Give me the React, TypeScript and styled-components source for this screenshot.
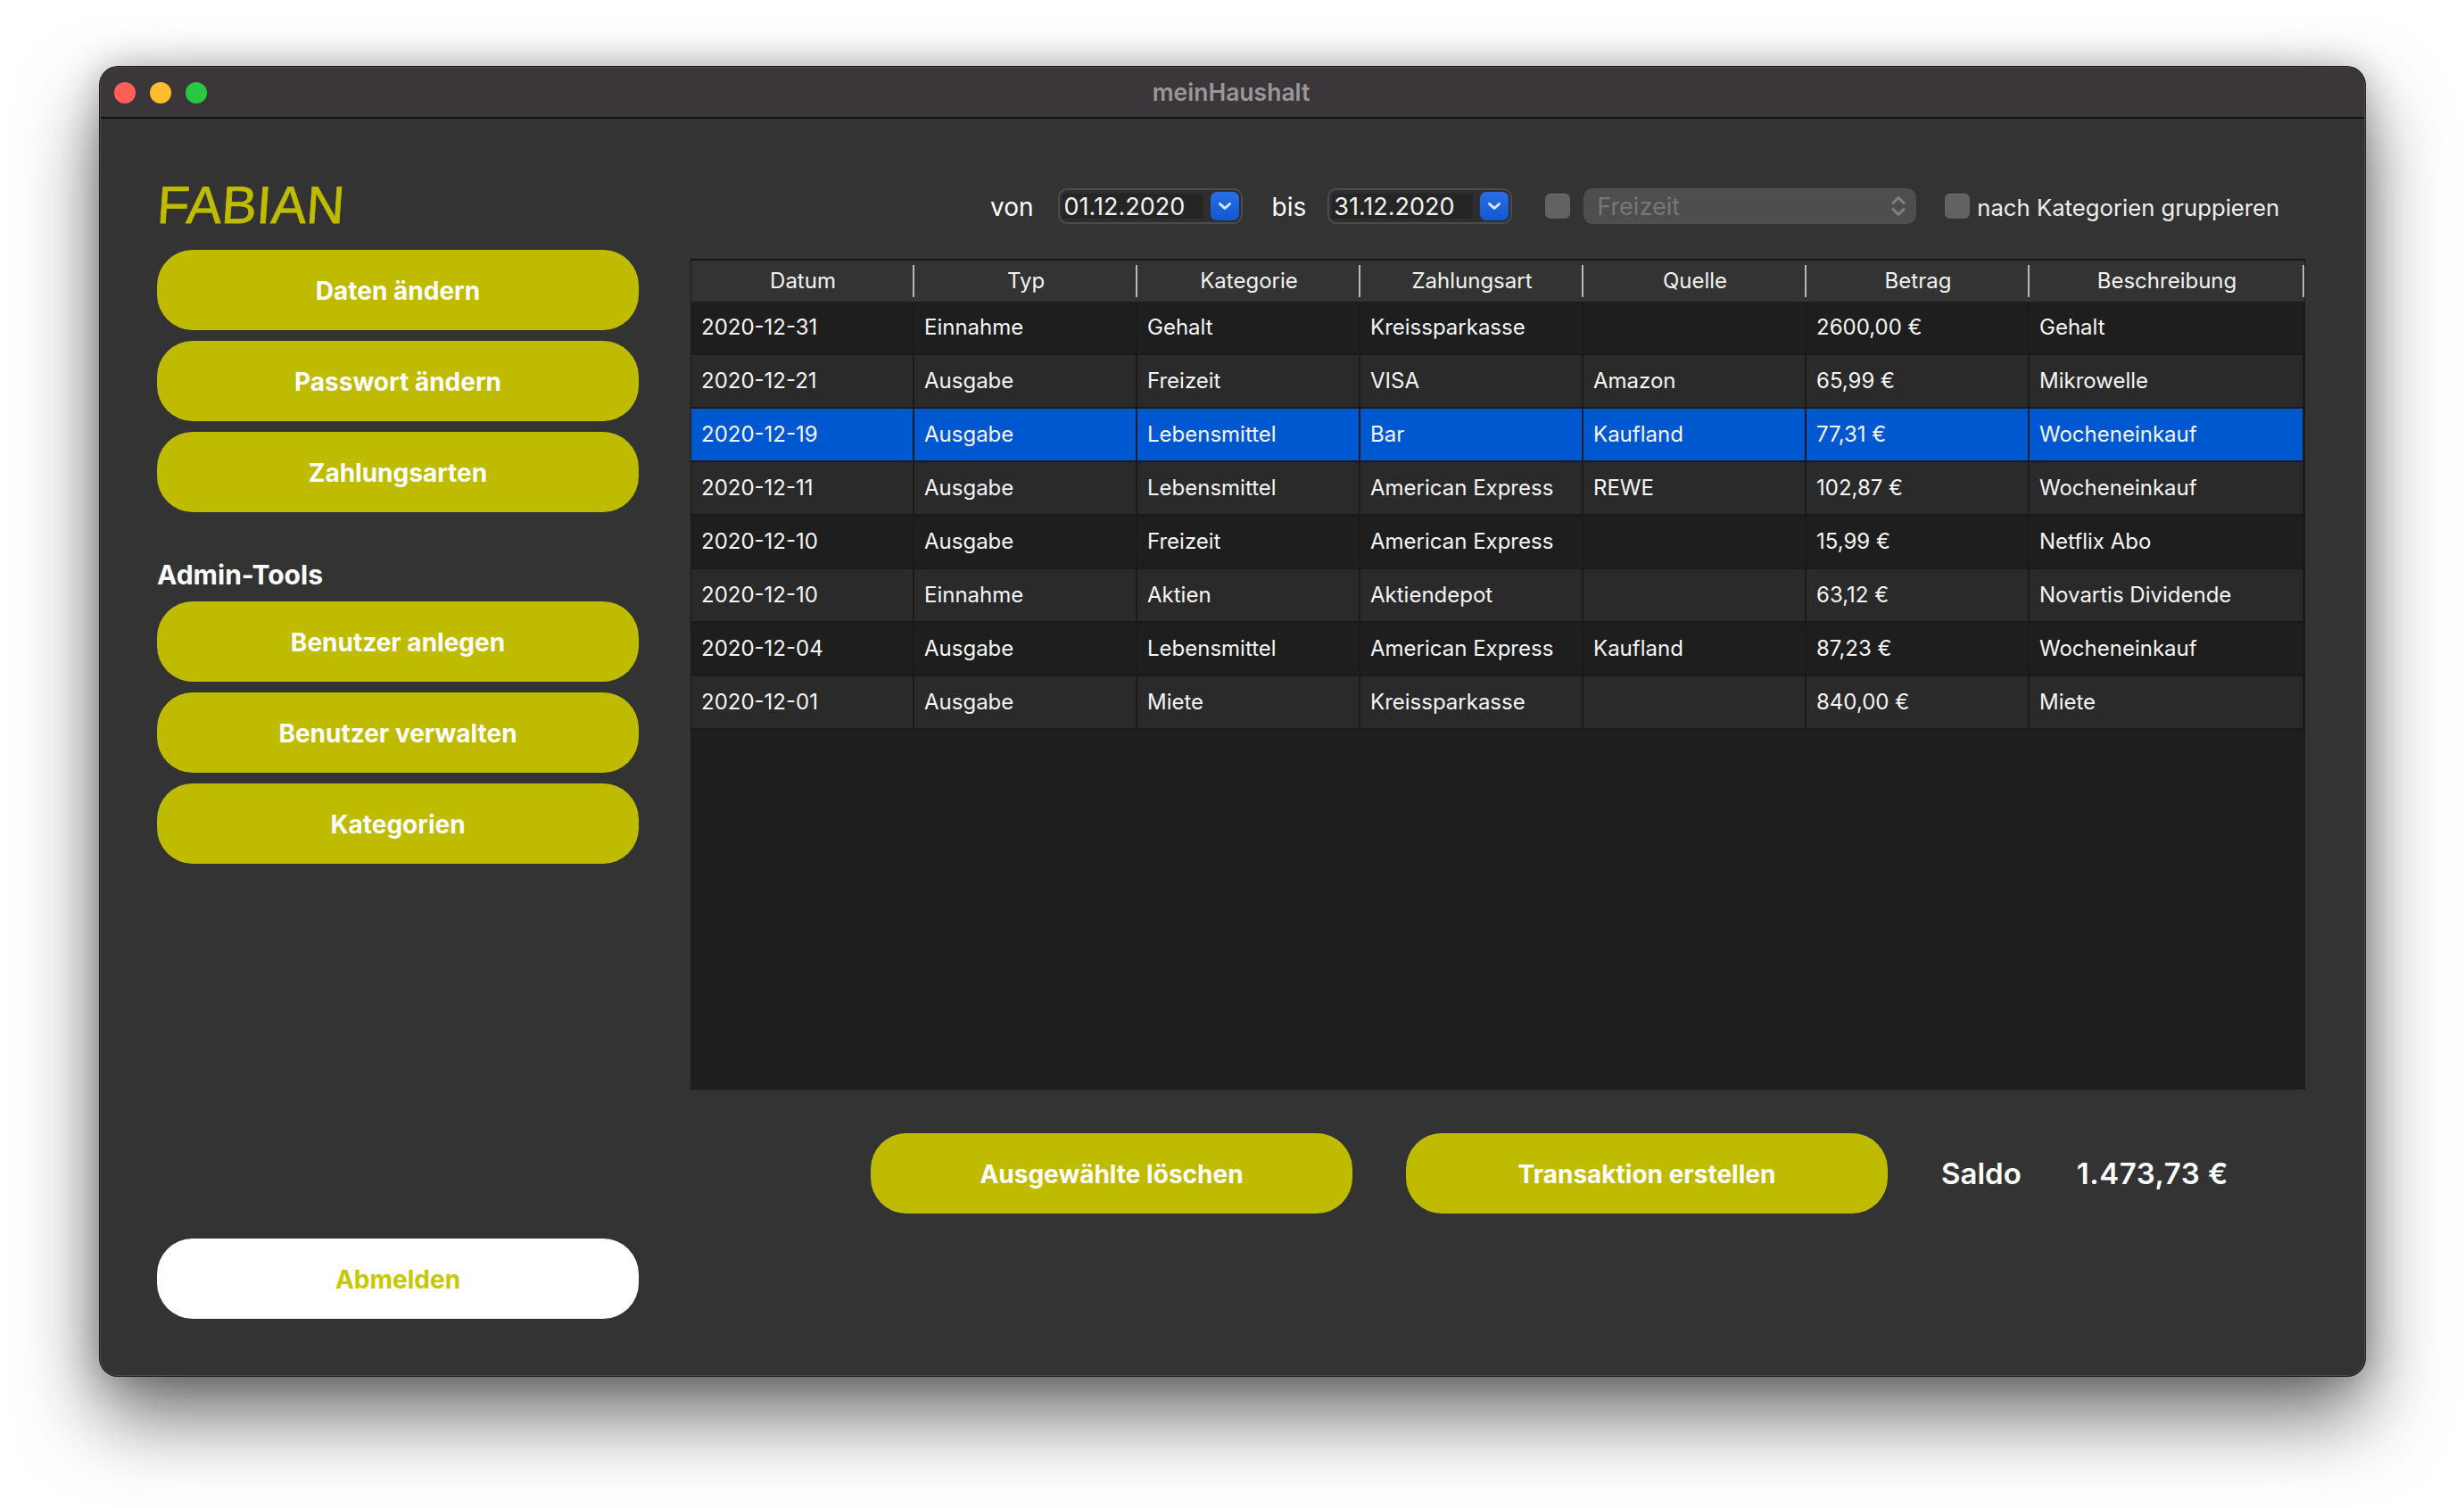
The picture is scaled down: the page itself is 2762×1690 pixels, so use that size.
import React from 'react';
import styled, { createGlobalStyle } from 'styled-components';

const GlobalStyle = createGlobalStyle`
  html, body {
    margin: 0;
    padding: 0;
    background: #ffffff;
  }
  * {
    box-sizing: border-box;
  }
`;

const Page = styled.div`
  width: 2762px;
  height: 1690px;
  padding: 75px 111px 148px 112px;
  overflow: hidden;
  font-family: Inter, "Liberation Sans", sans-serif;
  color: #ffffff;
`;

const Window = styled.div`
  width: 100%;
  height: 100%;
  display: flex;
  flex-direction: column;
  background: #333333;
  border-radius: 20px;
  border: 1px solid #4a4a4a;
  box-shadow: 0 0 0 1px #1a1a1a, 0 44px 90px rgba(0, 0, 0, 0.58), 0 0 40px rgba(0, 0, 0, 0.25);
  overflow: hidden;
`;

const TitleBar = styled.div`
  position: relative;
  flex: none;
  height: 57px;
  display: flex;
  align-items: center;
  justify-content: center;
  background: #3a363a;
  border-bottom: 2px solid #111111;
`;

const Lights = styled.div`
  position: absolute;
  left: 15px;
  top: 16px;
  display: flex;
  gap: 16px;
`;

const Light = styled.span<{ $color: string }>`
  width: 24px;
  height: 24px;
  border-radius: 50%;
  background: ${(p) => p.$color};
`;

const WindowTitle = styled.div`
  font-size: 26.5px;
  font-weight: 600;
  color: #9a9799;
  margin-left: -3px;
  padding-bottom: 2px;
`;

const Body = styled.div`
  flex: 1;
  display: flex;
  min-height: 0;
`;

const Sidebar = styled.aside`
  flex: none;
  width: 540px;
  margin-left: 63px;
  padding-bottom: 63px;
  display: flex;
  flex-direction: column;
`;

const UserName = styled.div`
  height: 147px;
  display: flex;
  align-items: flex-end;
  padding-bottom: 20px;
  margin-left: -3px;
  font-family: "Liberation Sans", sans-serif;
  font-size: 59px;
  line-height: 1;
  color: #bfbb00;
  -webkit-text-stroke: 0.8px #bfbb00;
  transform: skewX(-4deg);
  transform-origin: left bottom;
`;

const ButtonStack = styled.div`
  display: flex;
  flex-direction: column;
  gap: 12px;
`;

const PillButton = styled.button<{ $light?: boolean }>`
  flex: none;
  width: 540px;
  height: 90px;
  border: none;
  border-radius: 40px;
  padding: 2px 0 0;
  background: ${(p) => (p.$light ? '#ffffff' : '#bfbb00')};
  color: ${(p) => (p.$light ? '#c8c800' : '#ffffff')};
  font-family: inherit;
  font-size: 28px;
  font-weight: 700;
`;

const SectionLabel = styled.div`
  height: 100px;
  display: flex;
  align-items: flex-end;
  padding-bottom: 12px;
  font-size: 30px;
  font-weight: 700;
`;

const LogoutButton = styled(PillButton)`
  margin-top: auto;
`;

const Main = styled.main`
  flex: none;
  width: 1810px;
  margin-left: 58px;
  display: flex;
  flex-direction: column;
`;

const FilterBar = styled.div`
  height: 40px;
  margin-top: 78px;
  margin-bottom: 39px;
  display: flex;
  align-items: center;
  padding-left: 336px;
`;

const FilterLabel = styled.span<{ $gap: number }>`
  font-size: 28px;
  margin-right: ${(p) => p.$gap}px;
  padding-top: 2px;
`;

const DateBox = styled.div<{ $gap: number }>`
  width: 207px;
  height: 40px;
  padding: 4px 2px 4px 3px;
  display: flex;
  align-items: center;
  justify-content: space-between;
  background: #2e2e2e;
  border: 2px solid #4b4b4b;
  border-radius: 10px;
  margin-right: ${(p) => p.$gap}px;
`;

const DateField = styled.div`
  width: 158px;
  height: 28px;
  background: #252525;
  display: flex;
  align-items: center;
  padding-left: 2px;
  font-size: 27px;
  color: #f2f2f2;
`;

const StepButton = styled.div`
  width: 32px;
  height: 32px;
  border-radius: 7px;
  background: linear-gradient(#2a6fe6, #0f58d0);
  display: flex;
  align-items: center;
  justify-content: center;
`;

const CheckBox = styled.span<{ $gap: number }>`
  flex: none;
  width: 28px;
  height: 28px;
  border-radius: 6px;
  background: #626262;
  border-top: 1px solid #757575;
  margin-right: ${(p) => p.$gap}px;
`;

const Combo = styled.div`
  width: 373px;
  height: 40px;
  border-radius: 10px;
  background: #4e4e4e;
  padding: 0 12px 0 15px;
  margin-right: 32px;
  display: flex;
  align-items: center;
  justify-content: space-between;
  font-size: 27px;
  color: #777777;
`;

const CheckLabel = styled.span`
  font-size: 25.7px;
  color: #eeeeee;
  white-space: nowrap;
  padding-top: 2px;
`;

const TableFrame = styled.div`
  height: 931px;
  background: #1e1e1e;
  border: 1px solid #1a1a1a;
  border-top: 2px solid #161616;
`;

const Grid = styled.table`
  width: 1808px;
  table-layout: fixed;
  border-collapse: separate;
  border-spacing: 0;
  font-size: 24px;
`;

const HeaderCell = styled.th`
  position: relative;
  height: 46px;
  padding: 0 0 2px;
  background: #333333;
  font-weight: 400;
  color: #f2f2f2;

  &::after {
    content: '';
    position: absolute;
    right: 0;
    top: 5px;
    bottom: 5px;
    width: 2px;
    background: #b8b8b8;
  }
`;

const Row = styled.tr<{ $tone: 'dark' | 'light' | 'selected' }>`
  background: ${(p) =>
    p.$tone === 'selected' ? '#0058d0' : p.$tone === 'dark' ? '#1e1e1e' : '#2a2a2a'};
`;

const Cell = styled.td`
  height: 60px;
  padding: 0 0 1px 11px;
  border-right: 2px solid #1a1a1a;
  border-bottom: 2px solid #1a1a1a;
  color: #f5f5f5;
  white-space: nowrap;
`;

const Footer = styled.div`
  margin-top: 49px;
  padding-left: 202px;
  display: flex;
  align-items: center;
  gap: 60px;
`;

const SaldoText = styled.div`
  font-size: 33px;
  font-weight: 600;
  display: flex;
  gap: 62px;
`;

const Amount = styled.span`
  letter-spacing: 0.5px;
`;

const columns = [
  { title: 'Datum', width: 250 },
  { title: 'Typ', width: 250 },
  { title: 'Kategorie', width: 250 },
  { title: 'Zahlungsart', width: 250 },
  { title: 'Quelle', width: 250 },
  { title: 'Betrag', width: 250 },
  { title: 'Beschreibung', width: 308 },
];

const rows = [
  ['2020-12-31', 'Einnahme', 'Gehalt', 'Kreissparkasse', '', '2600,00 €', 'Gehalt'],
  ['2020-12-21', 'Ausgabe', 'Freizeit', 'VISA', 'Amazon', '65,99 €', 'Mikrowelle'],
  ['2020-12-19', 'Ausgabe', 'Lebensmittel', 'Bar', 'Kaufland', '77,31 €', 'Wocheneinkauf'],
  ['2020-12-11', 'Ausgabe', 'Lebensmittel', 'American Express', 'REWE', '102,87 €', 'Wocheneinkauf'],
  ['2020-12-10', 'Ausgabe', 'Freizeit', 'American Express', '', '15,99 €', 'Netflix Abo'],
  ['2020-12-10', 'Einnahme', 'Aktien', 'Aktiendepot', '', '63,12 €', 'Novartis Dividende'],
  ['2020-12-04', 'Ausgabe', 'Lebensmittel', 'American Express', 'Kaufland', '87,23 €', 'Wocheneinkauf'],
  ['2020-12-01', 'Ausgabe', 'Miete', 'Kreissparkasse', '', '840,00 €', 'Miete'],
];

const Chevron = () => (
  <svg width="16" height="12" viewBox="0 0 16 12" fill="none">
    <path d="M2.5 3.5L8 8.5l5.5-5" stroke="#dbe8ff" strokeWidth="3" strokeLinecap="round" strokeLinejoin="round" />
  </svg>
);

const UpDown = () => (
  <svg width="16" height="30" viewBox="0 0 16 30" fill="none">
    <path d="M2 11.5L8 5.5 14 11.5M2 18.5L8 24.5 14 18.5" stroke="#7f7f7f" strokeWidth="3" strokeLinecap="round" strokeLinejoin="round" />
  </svg>
);

const DatePicker: React.FC<{ value: string; gap: number }> = ({ value, gap }) => (
  <DateBox $gap={gap}>
    <DateField>{value}</DateField>
    <StepButton>
      <Chevron />
    </StepButton>
  </DateBox>
);

const App: React.FC = () => {
  return (
    <Page>
      <GlobalStyle />
      <Window>
        <TitleBar>
          <Lights>
            <Light $color="#ff5f57" />
            <Light $color="#febc2e" />
            <Light $color="#28c840" />
          </Lights>
          <WindowTitle>meinHaushalt</WindowTitle>
        </TitleBar>
        <Body>
          <Sidebar>
            <UserName>FABIAN</UserName>
            <ButtonStack>
              <PillButton>Daten ändern</PillButton>
              <PillButton>Passwort ändern</PillButton>
              <PillButton>Zahlungsarten</PillButton>
            </ButtonStack>
            <SectionLabel>Admin-Tools</SectionLabel>
            <ButtonStack>
              <PillButton>Benutzer anlegen</PillButton>
              <PillButton>Benutzer verwalten</PillButton>
              <PillButton>Kategorien</PillButton>
            </ButtonStack>
            <LogoutButton $light>Abmelden</LogoutButton>
          </Sidebar>
          <Main>
            <FilterBar>
              <FilterLabel $gap={27}>von</FilterLabel>
              <DatePicker value="01.12.2020" gap={33} />
              <FilterLabel $gap={24}>bis</FilterLabel>
              <DatePicker value="31.12.2020" gap={37} />
              <CheckBox $gap={15} />
              <Combo>
                Freizeit
                <UpDown />
              </Combo>
              <CheckBox $gap={8} />
              <CheckLabel>nach Kategorien gruppieren</CheckLabel>
            </FilterBar>
            <TableFrame>
              <Grid>
                <colgroup>
                  {columns.map((c) => (
                    <col key={c.title} width={c.width} />
                  ))}
                </colgroup>
                <thead>
                  <tr>
                    {columns.map((c) => (
                      <HeaderCell key={c.title}>{c.title}</HeaderCell>
                    ))}
                  </tr>
                </thead>
                <tbody>
                  {rows.map((row, i) => (
                    <Row key={i} $tone={i === 2 ? 'selected' : i % 2 === 0 ? 'dark' : 'light'}>
                      {row.map((value, j) => (
                        <Cell key={j}>{value}</Cell>
                      ))}
                    </Row>
                  ))}
                </tbody>
              </Grid>
            </TableFrame>
            <Footer>
              <PillButton>Ausgewählte löschen</PillButton>
              <PillButton>Transaktion erstellen</PillButton>
              <SaldoText>
                <span>Saldo</span>
                <Amount>1.473,73 €</Amount>
              </SaldoText>
            </Footer>
          </Main>
        </Body>
      </Window>
    </Page>
  );
};

export default App;
